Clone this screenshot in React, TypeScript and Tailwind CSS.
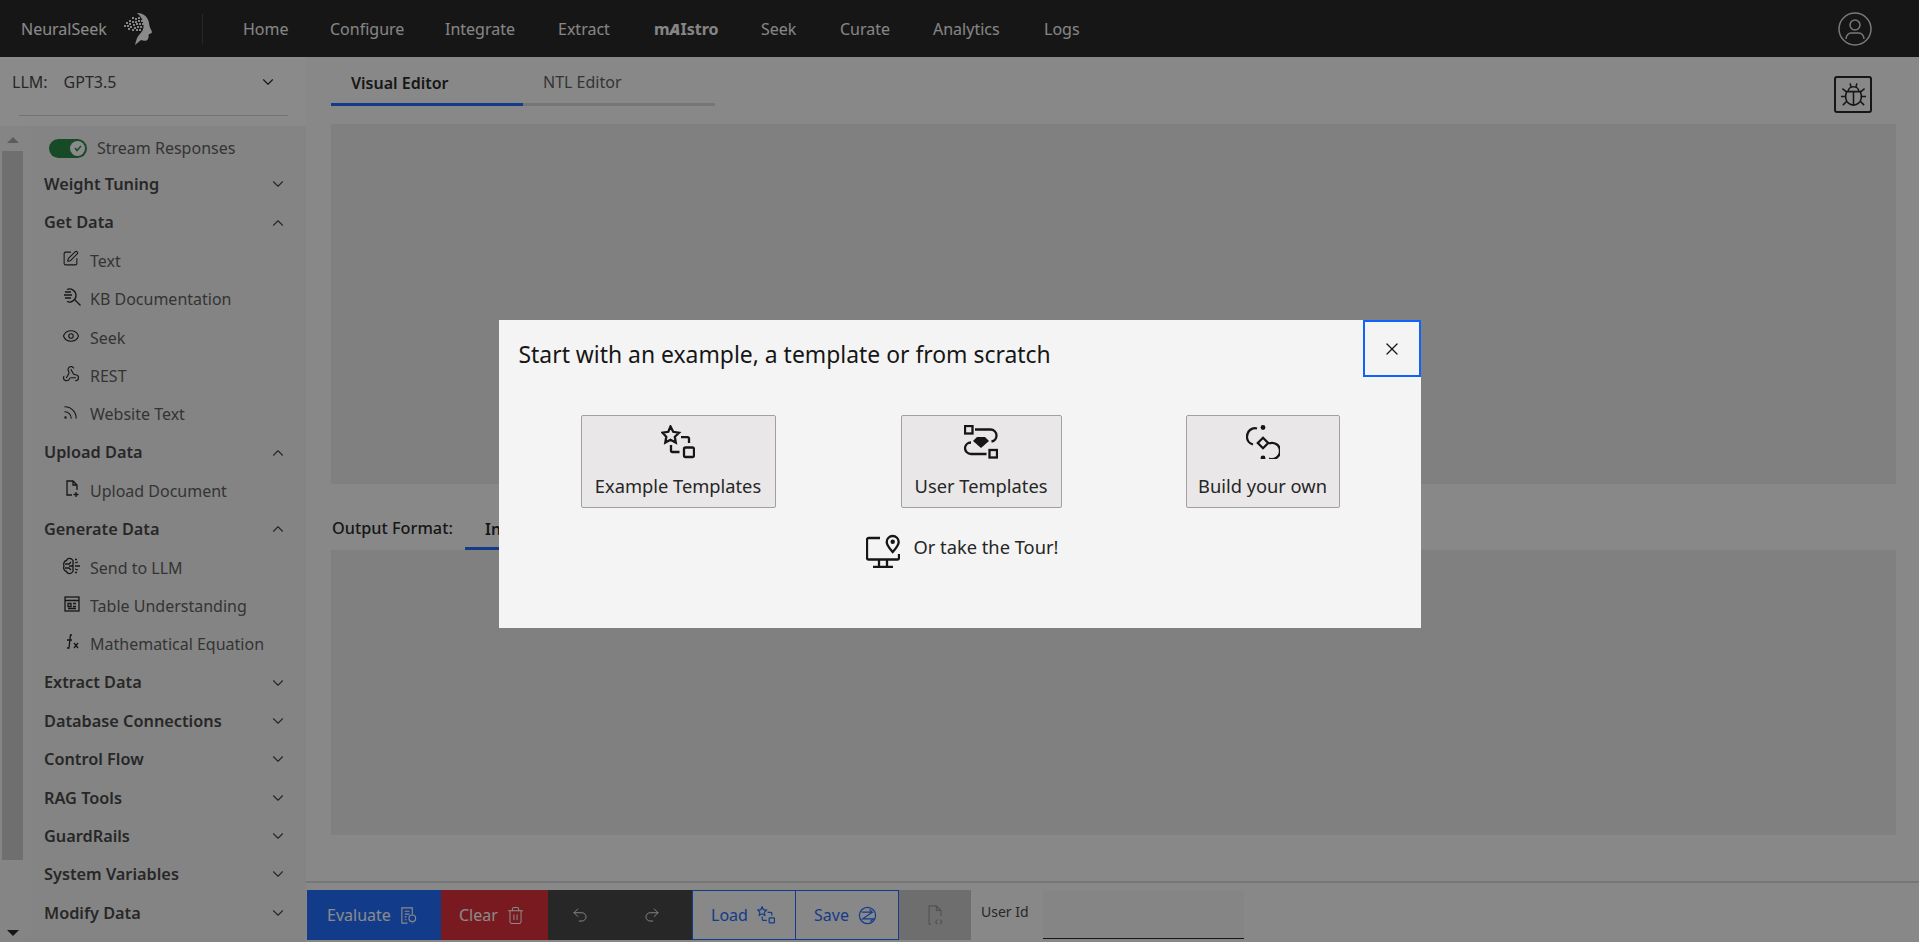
import { ChevronDown, ChevronUp, Eye, Rss, SquarePen, Trash2, Undo2, Redo2, Webhook, X } from "lucide-react";

// ----------------------------------------------------------------------

const FONT = "font-['Noto_Sans','Liberation_Sans',sans-serif]";

const navLinks = [
  { label: "Home", width: "w-[45px]" },
  { label: "Configure", width: "w-[73px]" },
  { label: "Integrate", width: "w-[71px]" },
  { label: "Extract", width: "w-[54px]" },
];

const navLinksEnd = [
  { label: "Seek", width: "w-[37px]" },
  { label: "Curate", width: "w-[51px]" },
  { label: "Analytics", width: "w-[69px]" },
  { label: "Logs", width: "w-[35px]" },
];

const brainDots = [
  [9, 4], [12, 5], [15, 4], [6, 7], [9, 8], [12, 8], [15, 7], [18, 7], [3, 9], [6, 10], [10, 11], [13, 10],
  [16, 10], [19, 10], [1, 12], [4, 12], [7, 13], [11, 14], [14, 13], [17, 13], [5, 15], [9, 16], [13, 16], [16, 16],
];

// ----------------------------------------------------------------------

function StarShapesIcon({ className }: { className: string }) {
  return (
    <svg viewBox="0 0 34 34" fill="none" stroke="currentColor" strokeWidth="2.300" className={className}>
      <path d="M9.500 1.500l2.700 5.300 5.800.9-4.200 4.100 1 5.800-5.300-2.800-5.200 2.800 1-5.800L1.500 7.700l5.800-.9z" />
      <path d="M20 12.200h6.500a1.500 1.500 0 0 1 1.500 1.500V18" />
      <path d="M10 20v5.500a1.500 1.500 0 0 0 1.500 1.500h7" />
      <rect x="23" y="22.500" width="10" height="9.500" rx="1.500" />
    </svg>
  );
}

function GemShapesIcon({ className }: { className: string }) {
  return (
    <svg viewBox="0 0 34 34" fill="none" stroke="currentColor" strokeWidth="2.300" className={className}>
      <rect x="1" y="1" width="7.500" height="7.500" />
      <rect x="25.500" y="25" width="7.500" height="7.500" />
      <path d="M11 4.500h15.500a6 6 0 0 1 6 6 6 6 0 0 1-5 6" />
      <path d="M7 17.500a6 6 0 0 0-6 5.500 6 6 0 0 0 6 6h15.500" />
      <path d="M13 12h8l4 4-8 7-8-7z" fill="currentColor" stroke="none" />
    </svg>
  );
}

function BuildOwnIcon({ className }: { className: string }) {
  return (
    <svg viewBox="0 0 34 34" fill="none" stroke="currentColor" strokeWidth="2.300" className={className}>
      <circle cx="17" cy="2.500" r="2.400" fill="currentColor" stroke="none" />
      <circle cx="17" cy="33" r="2.400" fill="currentColor" stroke="none" />
      <path d="M17 12.800l5.200 5.200-5.200 5.200-5.200-5.200z" />
      <path d="M11 3.500a8 8 0 0 0-10 8 8 8 0 0 0 6 8" />
      <path d="M23 18.500a8 8 0 0 1 11 7.500 8 8 0 0 1-11 7.500" />
    </svg>
  );
}

function TourIcon({ className }: { className: string }) {
  return (
    <svg viewBox="0 0 34 34" fill="none" stroke="currentColor" strokeWidth="2.300" className={className}>
      <path d="M14 4H2.500A1.500 1.500 0 0 0 1 5.500V24a1.500 1.500 0 0 0 1.500 1.500h29A1.500 1.500 0 0 0 33 24v-4" />
      <path d="M13 25.500V33M21 25.500V33M7 33h20" />
      <path d="M26.700 18c-3-3.400-6-6.500-6-10a6 6 0 0 1 12 0c0 3.500-3 6.600-6 10z" />
      <circle cx="26.700" cy="7.700" r="2.200" fill="currentColor" stroke="none" />
    </svg>
  );
}

function SearchLinesIcon() {
  return (
    <svg viewBox="0 0 20 20" fill="none" stroke="currentColor" strokeWidth="1.300" className="size-5">
      <path d="M5 2.500a6.500 6.500 0 1 1 0 12" />
      <path d="M3 5h6M2 8h8M3 11h6M13 13l5.500 5.500" />
    </svg>
  );
}

function UploadDocIcon() {
  return (
    <svg viewBox="0 0 20 20" fill="none" stroke="currentColor" strokeWidth="1.300" className="size-5">
      <path d="M10 16H5V2h6l4 4v5M11 2v4h4M14 13v5M11.500 15.500h5" />
    </svg>
  );
}

function BrainIcon() {
  return (
    <svg viewBox="0 0 20 20" fill="none" stroke="currentColor" strokeWidth="1.300" className="size-5">
      <path d="M11 4.500C9 1.500 5 2 4.500 4.500 2 5 1 8 2 10c-1 2 0 5 2.500 5.500C5 18 9 18.500 11 15.500z" />
      <path d="M3 8h4l2-2M3 12h4l2 2M7 10h4M13 3.500h2M13 7l3-1M13 10h5M13 13l3 1M13 16.500h2" />
    </svg>
  );
}

function TableIcon() {
  return (
    <svg viewBox="0 0 20 20" fill="none" stroke="currentColor" strokeWidth="1.300" className="size-5">
      <rect x="3" y="3" width="14" height="14" />
      <path d="M3 6.500h14M6 9.500h3v3H6zM11 9.500h3M11 12.500h3M6 14.500h8" />
    </svg>
  );
}

function FxIcon() {
  return (
    <svg viewBox="0 0 20 20" fill="none" stroke="currentColor" strokeWidth="1.300" className="size-5">
      <path d="M10 3H8.500L7 16H5M5 8h5M12 11l4 5M16 11l-4 5" />
    </svg>
  );
}

function EvaluateIcon() {
  return (
    <svg viewBox="0 0 20 20" fill="none" stroke="currentColor" strokeWidth="1.200" className="size-[19px]">
      <path d="M9 18H3V2h11v7M6 5.500h5M6 8.500h5M6 11.500h2M6 14.500h2" />
      <circle cx="14" cy="13" r="3.500" />
      <path d="M14 18.500v.5" />
    </svg>
  );
}

function SaveIcon() {
  return (
    <svg viewBox="0 0 20 20" fill="none" stroke="currentColor" strokeWidth="1.300" className="size-[19px]">
      <circle cx="10" cy="10" r="8.500" />
      <path d="M4 6.500h11l-3-3M15 6.500L5 13.500h11l-3 3" />
    </svg>
  );
}

function FileCodeIcon() {
  return (
    <svg viewBox="0 0 20 24" fill="none" stroke="currentColor" strokeWidth="1.200" className="h-[22px] w-[19px]">
      <path d="M5 22H3V2h8l5 5v6M11 2v5h5M12 17l-2 2.500 2 2.500M15 17l2 2.500-2 2.500" />
    </svg>
  );
}

function BugIcon() {
  return (
    <svg viewBox="0 0 28 28" fill="none" stroke="currentColor" strokeWidth="1.600" className="size-[27px]">
      <path d="M8.500 11c0-3 2.500-5 5.500-5s5.500 2 5.500 5" />
      <path d="M7 11h14c1 2 1.500 4 1 7-.5 4-4 7-8 7s-7.500-3-8-7c-.5-3 0-5 1-7z" />
      <path d="M14 11v14M10.500 2.500L11.500 6.500M17.500 2.500L16.500 6.500M1 16h5M22 16h5M2.500 8l4.500 3.500M25.500 8L21 11.500M3 25l4-4M25 25l-4-4" />
    </svg>
  );
}

function LogoIcon() {
  return (
    <svg viewBox="0 0 30 32" className="h-[32px] w-[30px]">
      <path
        d="M14 0c4 0 8 1.500 10 5 2 3 2 5 2.500 8 .5 2 2.500 5 2.500 6 0 1.500-2.500 1.500-3.500 2.500.5 2 0 5-2 6-2 .5-4 0-5.500-.5L12 32c1-4 1.500-7 4-10 3-3 5-6 4.500-10C20 7 18 3 14 0z"
        fill="#ffffff"
      />
      {brainDots.map(([x, y]) => (
        <rect key={`${x}-${y}`} x={x} y={y} width="2" height="2" fill="#f4f4f4" />
      ))}
    </svg>
  );
}

// ----------------------------------------------------------------------

function SectionRow({ label, open }: { label: string; open?: boolean }) {
  return (
    <div className="flex h-[38.35px] items-center justify-between pr-[19px] pl-[19px]">
      <span className="text-[16.300px] leading-none font-semibold text-[#393939]">{label}</span>
      {open ? (
        <ChevronUp className="size-[18px] text-[#393939]" strokeWidth={1.500} />
      ) : (
        <ChevronDown className="size-[18px] text-[#393939]" strokeWidth={1.500} />
      )}
    </div>
  );
}

function ItemRow({ label, icon }: { label: string; icon: React.ReactNode }) {
  return (
    <div className="flex h-[38.35px] items-center pl-[37px] text-[#161616]">
      <span className="flex w-[28px] -translate-y-[2px]">{icon}</span>
      <span className="text-[16px] leading-none text-[#525252]">{label}</span>
    </div>
  );
}

function Sidebar() {
  return (
    <aside className="flex w-[306px] shrink-0 flex-col">
      <div className="flex h-[58px] items-center justify-between pr-[29px] pl-[12px] pb-[8px] text-[#393939]">
        <div className="flex gap-[16px] text-[16px]">
          <span>LLM:</span>
          <span>GPT3.5</span>
        </div>
        <ChevronDown className="size-[18px] text-[#161616]" strokeWidth={1.500} />
      </div>
      <div className="mr-[18px] ml-[19px] h-[1px] bg-[#d0d0d0]" />
      <div className="mt-[10px] flex min-h-0 flex-1">
        <div className="relative w-[25px] shrink-0 bg-[#f5f5f5]">
          <div className="absolute top-[11px] left-[7px] h-0 w-0 border-x-[6px] border-b-[6px] border-x-transparent border-b-[#a3a3a3]" />
          <div className="absolute top-[25px] bottom-[82px] left-[2px] w-[21px] bg-[#c8c8c8]" />
          <div className="absolute bottom-[6px] left-[7px] h-0 w-0 border-x-[6px] border-t-[6px] border-x-transparent border-t-[#161616]" />
        </div>
        <div className="min-w-0 flex-1 bg-[#f2f2f2] pt-[5px]">
          <div className="flex h-[34px] items-center gap-[10px] pl-[24px]">
            <div className="relative h-[19px] w-[38px] rounded-full bg-[#198038]">
              <div className="absolute top-[2px] right-[2px] flex size-[15px] items-center justify-center rounded-full bg-white">
                <svg viewBox="0 0 10 10" fill="none" stroke="#198038" strokeWidth="1.500" className="size-[10px]">
                  <path d="M2 5l2 2.500L8 3" />
                </svg>
              </div>
            </div>
            <span className="text-[16px] leading-none text-[#525252]">Stream Responses</span>
          </div>
          <SectionRow label="Weight Tuning" />
          <SectionRow label="Get Data" open />
          <ItemRow label="Text" icon={<SquarePen className="size-[17px]" strokeWidth={1.500} />} />
          <ItemRow label="KB Documentation" icon={<SearchLinesIcon />} />
          <ItemRow label="Seek" icon={<Eye className="size-[18px]" strokeWidth={1.500} />} />
          <ItemRow label="REST" icon={<Webhook className="size-[18px]" strokeWidth={1.500} />} />
          <ItemRow label="Website Text" icon={<Rss className="size-[17px]" strokeWidth={1.500} />} />
          <SectionRow label="Upload Data" open />
          <ItemRow label="Upload Document" icon={<UploadDocIcon />} />
          <SectionRow label="Generate Data" open />
          <ItemRow label="Send to LLM" icon={<BrainIcon />} />
          <ItemRow label="Table Understanding" icon={<TableIcon />} />
          <ItemRow label="Mathematical Equation" icon={<FxIcon />} />
          <SectionRow label="Extract Data" />
          <SectionRow label="Database Connections" />
          <SectionRow label="Control Flow" />
          <SectionRow label="RAG Tools" />
          <SectionRow label="GuardRails" />
          <SectionRow label="System Variables" />
          <SectionRow label="Modify Data" />
        </div>
      </div>
    </aside>
  );
}

function Footer() {
  return (
    <div className="mt-auto border-t-2 border-[#d6d6d6] pt-[7px] pb-[2px] pl-[1px]">
      <div className="flex h-[50px] items-stretch text-[16px]">
        <div className="flex w-[134px] items-center gap-[8px] bg-[#0f62fe] pl-[20px] text-white">
          Evaluate
          <EvaluateIcon />
        </div>
        <div className="flex w-[107px] items-center gap-[8px] bg-[#da1e28] pl-[18px] text-white">
          Clear
          <Trash2 className="size-[19px]" strokeWidth={1.300} />
        </div>
        <div className="flex w-[144px] items-center gap-[54px] bg-[#393939] pl-[23px] text-[#f4f4f4]">
          <Undo2 className="size-[18px]" strokeWidth={1.300} />
          <Redo2 className="size-[18px]" strokeWidth={1.300} />
        </div>
        <div className="flex w-[104px] items-center gap-[9px] border border-[#0f62fe] pl-[18px] text-[#0f62fe]">
          Load
          <StarShapesIcon className="size-[18px]" />
        </div>
        <div className="flex w-[103px] items-center gap-[9px] border border-l-0 border-[#0f62fe] pl-[18px] text-[#0f62fe]">
          Save
          <SaveIcon />
        </div>
        <div className="flex w-[72px] items-center justify-center bg-[#c6c6c6] text-[#8d8d8d]">
          <FileCodeIcon />
        </div>
        <span className="ml-[10px] w-[62px] pt-[15px] text-[14px] leading-none text-[#393939]">User Id</span>
        <div className="my-[1px] w-[201px] border-b border-[#161616] bg-[#f4f4f4]" />
      </div>
    </div>
  );
}

function MainContent() {
  return (
    <main className="flex min-w-0 flex-1 flex-col bg-[#fafafa]">
      <div className="flex h-[67px] items-start justify-between pr-[47px] pl-[25px]">
        <div className="flex h-[49px] items-stretch">
          <div className="flex w-[192px] items-center border-b-[3px] border-[#0f62fe] pt-[6px] pl-[20px] text-[16px] font-semibold text-[#161616]">
            Visual Editor
          </div>
          <div className="flex w-[192px] items-center border-b-[3px] border-[#d6d6d6] pt-[4px] pl-[20px] text-[16px] text-[#525252]">
            NTL Editor
          </div>
        </div>
        <div className="mt-[19px] flex h-[37px] w-[38px] items-center justify-center rounded-[3px] border-2 border-[#161616] text-[#161616]">
          <BugIcon />
        </div>
      </div>
      <div className="mr-[23px] ml-[25px] h-[360px] bg-[#eaeaea]" />
      <div className="ml-[26px] flex h-[66px] items-end">
        <span className="w-[133px] pb-[14px] text-[16.300px] leading-none font-medium text-[#161616]">Output Format:</span>
        <div className="flex h-[40px] w-[200px] items-center border-b-[3px] border-[#0f62fe] pl-[20px] text-[16px] font-semibold text-[#161616]">
          Input
        </div>
      </div>
      <div className="mr-[23px] ml-[25px] h-[285px] bg-[#eaeaea]" />
      <Footer />
    </main>
  );
}

function StartModal() {
  return (
    <div className="fixed inset-0 flex items-start justify-center bg-[#161616]/50 pt-[320px]">
      <div className="relative h-[308px] w-[922px] bg-[#f4f4f4] text-[#161616]">
        <button className="absolute top-0 right-0 flex h-[57px] w-[58px] items-center justify-center border-2 border-[#0f62fe]">
          <X className="size-[20px]" strokeWidth={1.500} />
        </button>
        <h2 className="pt-[19px] pl-[20px] text-[22.900px] leading-[32px] font-normal">
          Start with an example, a template or from scratch
        </h2>
        <div className="mt-[44px] flex pl-[82px]">
          <div className="flex h-[93px] w-[195px] flex-col items-center rounded-[2px] border border-[#a0a0a0] bg-[#e9e7e8] pt-[9px]">
            <StarShapesIcon className="size-[34px]" />
            <span className="mt-[18px] text-[18.300px] leading-none text-[#262626]">Example Templates</span>
          </div>
          <div className="ml-[125px] flex h-[93px] w-[161px] flex-col items-center rounded-[2px] border border-[#a0a0a0] bg-[#e9e7e8] pt-[9px]">
            <GemShapesIcon className="size-[34px]" />
            <span className="mt-[18px] text-[18.300px] leading-none text-[#262626]">User Templates</span>
          </div>
          <div className="ml-[124px] flex h-[93px] w-[154px] flex-col items-center rounded-[2px] border border-[#a0a0a0] bg-[#e9e7e8] pt-[9px]">
            <BuildOwnIcon className="size-[34px]" />
            <span className="mt-[18px] text-[18.300px] leading-none text-[#262626]">Build your own</span>
          </div>
        </div>
        <div className="mt-[26px] ml-[367px] flex items-center gap-[14px]">
          <TourIcon className="size-[34px]" />
          <span className="-translate-y-[4px] text-[18.300px] leading-none text-[#262626]">Or take the Tour!</span>
        </div>
      </div>
    </div>
  );
}

export default function App() {
  return (
    <div className={`${FONT} flex h-screen flex-col overflow-hidden bg-white`}>
      <header className="flex h-[57px] shrink-0 items-center bg-[#161616] text-[16px]">
        <span className="ml-[21px] w-[102px] text-white">NeuralSeek</span>
        <LogoIcon />
        <div className="mr-[40px] ml-[49px] h-[30px] w-[1px] bg-[#393939]" />
        <nav className="flex items-center gap-[42px] text-[#f4f4f4]">
          {navLinks.map((link) => (
            <span key={link.label} className={`${link.width} whitespace-nowrap`}>
              {link.label}
            </span>
          ))}
          <span className="w-[65px] font-bold whitespace-nowrap">
            m<span className="font-black italic">A</span>Istro
          </span>
          {navLinksEnd.map((link) => (
            <span key={link.label} className={`${link.width} whitespace-nowrap`}>
              {link.label}
            </span>
          ))}
        </nav>
        <svg viewBox="0 0 34 34" fill="none" stroke="#dcdcdc" strokeWidth="1.500" className="mr-[47px] ml-auto size-[34px]">
          <circle cx="17" cy="17" r="16" />
          <circle cx="17" cy="13" r="5" />
          <path d="M8 27c0-4 3-6 5-6h8c2 0 5 2 5 6" />
        </svg>
      </header>
      <div className="flex min-h-0 flex-1">
        <Sidebar />
        <MainContent />
      </div>
      <StartModal />
    </div>
  );
}
